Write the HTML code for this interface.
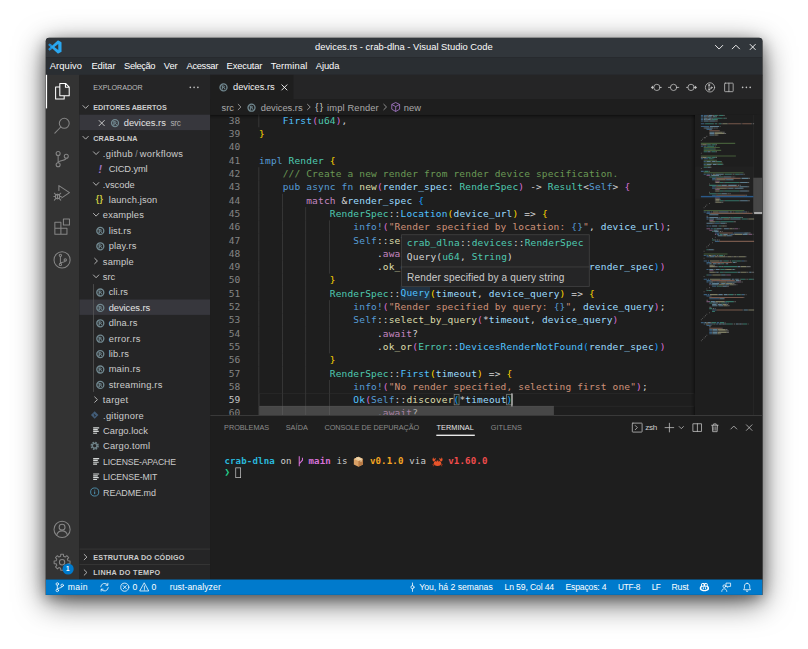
<!DOCTYPE html>
<html lang="pt-BR">
<head>
<meta charset="utf-8">
<title>devices.rs - crab-dlna - Visual Studio Code</title>
<style>
*{box-sizing:border-box;margin:0;padding:0}
html,body{width:808px;height:649px;overflow:hidden;background:#fff}
body{position:relative;font-family:"Liberation Sans","DejaVu Sans",sans-serif;}
#shadow{position:absolute;left:45.9px;top:37.9px;width:716.4px;height:556.5px;border-radius:3px;
  box-shadow:0 8px 31px 0 rgba(0,0,0,.66),0 4px 14px 0 rgba(0,0,0,.36);}
#win{position:absolute;left:45px;top:37px;width:1030px;height:800px;transform:scale(.7);transform-origin:0 0;color:#ccc;font-size:13.3px;}
#in{left:.57px;top:.5px;width:1024.9px;height:796.5px;border-radius:5px 5px 0 0;overflow:hidden;background:#1e1e1e}
#win div,#win span,#win svg{position:absolute}
.t{white-space:pre;line-height:1}
svg{overflow:visible}
/* title + menu */
#title{left:0;top:0;width:100%;height:28.6px;background:#31363b}
#title .t{color:#fcfcfc;font-size:13.4px;top:7.7px}
#menu{left:0;top:28.1px;width:100%;height:26px;background:#2a2e32}
#menu .t{color:#fcfcfc;font-size:13.4px;top:5.3px}
/* activity */
#activity{left:0;top:53.65px;width:48.3px;height:721.2px;background:#333333}
#activity svg{left:9.6px;width:28.8px;height:28.8px;margin-top:-2.4px;fill:none;stroke:#858585;stroke-width:1.25;stroke-linejoin:round;stroke-linecap:round}
#activity svg.on{stroke:#fff}
/* sidebar */
#sidebar{left:48px;top:53.65px;width:187.3px;height:721.2px;background:#252526;overflow:hidden}
#sidebar .hd{left:0;width:100%;height:22px}
#sidebar .hd .t{left:20.4px;top:6.8px;font-size:10.3px;font-weight:bold;color:#ccc;letter-spacing:0}
#sidebar .row{left:0;width:100%;height:22px}
#sidebar .row .t{top:5.3px;font-size:13.3px;color:#ccc}
#sidebar .row.sel{background:#37373d}
#sidebar .row.sel .t{color:#e4e4e4}
.chev{width:16px;height:16px;fill:none;stroke:#c5c5c5;stroke-width:1.25;stroke-linecap:round;stroke-linejoin:round}
.ico{width:16px;height:16px}
/* main */
#main{left:235px;top:53.65px;width:789.9px;height:721.2px;background:#1e1e1e;overflow:hidden}
#tabs{left:0;top:0;width:100%;height:35px;background:#252526}
#tab1{left:0;top:0;width:119.7px;height:35px;background:#1e1e1e}
#bc{left:0;top:35px;width:100%;height:22px;background:#1e1e1e}
#bc .t{top:4.6px;font-size:13.3px;color:#a9a9a9}
#ed{left:0;top:57px;width:100%;height:428.6px;background:#1e1e1e;overflow:hidden}
#code{left:0;top:-1.5px;width:100%;font-family:"DejaVu Sans Mono","Liberation Mono",monospace;font-size:13.6px;color:#d4d4d4}
#code .ln{left:0;height:19px;width:693.4px;line-height:19px;white-space:pre}
#code .no{left:0;width:43.4px;text-align:right;color:#858585;height:19px;line-height:19px}
#code .no.cur{color:#c6c6c6}
#code .tx{left:70.3px;height:19px;line-height:19px;white-space:pre;letter-spacing:.23px}
#code .tx span{position:static}
.k{color:#569cd6}.c{color:#c586c0}.ty{color:#4ec9b0}.f{color:#dcdcaa}.v{color:#9cdcfe}.e{color:#4fc1ff}
.cm{color:#6a9955}.s{color:#ce9178}.b1{color:#ffd700}.b2{color:#da70d6}.b3{color:#179fff}
.ig{width:1px;background:#404040}
/* panel */
#panel{left:0;top:485.6px;width:100%;height:235.3px;background:#1e1e1e;border-top:1px solid #454545}
#panel .pt{top:12.5px;font-size:10.4px;color:#8b8b8b}
#panel .pt.on{color:#e7e7e7}
#term{font-family:"DejaVu Sans Mono","Liberation Mono",monospace;font-size:13px;color:#ccc}
#term .t{line-height:16px;height:16px}
#term span span{position:static}
/* status */
#status{left:0;top:774.5px;width:100%;height:22.2px;background:#007acc}
#status .t{color:#fff;font-size:12.4px;top:5.1px}
#status svg{fill:none;stroke:#fff;stroke-width:1.1;stroke-linecap:round;stroke-linejoin:round;width:16px;height:16px;top:3px}
</style>
</head>
<body>
<div id="shadow"></div>
<div id="win"><div id="in">
<div id="title">
<svg style="left:4.9px;top:4.6px;width:18.6px;height:18.6px" viewBox="0 0 24 24"><path fill="#2aa7f0" d="M23.15 2.587L18.21.21a1.494 1.494 0 0 0-1.705.29l-9.46 8.63-4.12-3.128a.999.999 0 0 0-1.276.057L.327 7.261A1 1 0 0 0 .326 8.74L3.899 12 .326 15.26a1 1 0 0 0 .001 1.479L1.65 17.94a.999.999 0 0 0 1.276.057l4.12-3.128 9.46 8.63a1.492 1.492 0 0 0 1.704.29l4.942-2.377A1.5 1.5 0 0 0 24 20.06V3.939a1.5 1.5 0 0 0-.85-1.352zm-5.146 14.861L10.826 12l7.178-5.448v10.896z"/><path fill="#1f8ad2" d="M.326 8.74L3.899 12 .326 15.26a1 1 0 0 0 .001 1.479L1.65 17.94a.999.999 0 0 0 1.276.057l4.12-3.128L3.9 12 7.045 9.13l-4.12-3.128a.999.999 0 0 0-1.276.057L.327 7.261A1 1 0 0 0 .326 8.74z"/></svg>
<span class="t" style="left:385.1px;;letter-spacing:0.01px">devices.rs - crab-dlna - Visual Studio Code</span>
<svg style="left:954.1px;top:6px;width:16px;height:16px" viewBox="0 0 16 16" fill="none" stroke="#fcfcfc" stroke-width="1.3"><path d="M2.4 4.6 L8 10.2 L13.6 4.6"/></svg>
<svg style="left:978.4px;top:6px;width:16px;height:16px" viewBox="0 0 16 16" fill="none" stroke="#fcfcfc" stroke-width="1.3"><path d="M2.4 10.3 L8 4.7 L13.6 10.3"/></svg>
<svg style="left:1002.6px;top:6px;width:16px;height:16px" viewBox="0 0 16 16" fill="none" stroke="#fcfcfc" stroke-width="1.3"><path d="M3.9 3.2 L12.1 11.400 M12.1 3.2 L3.9 11.400"/></svg>
</div>
<div id="menu">
<span class="t" style="left:6.3px;;letter-spacing:0.10px">Arquivo</span>
<span class="t" style="left:65.7px;;letter-spacing:-0.07px">Editar</span>
<span class="t" style="left:112.4px;;letter-spacing:-0.57px">Seleção</span>
<span class="t" style="left:169.1px;;letter-spacing:-0.13px">Ver</span>
<span class="t" style="left:201.6px;;letter-spacing:-0.50px">Acessar</span>
<span class="t" style="left:258.9px;;letter-spacing:-0.25px">Executar</span>
<span class="t" style="left:322.0px;;letter-spacing:0.23px">Terminal</span>
<span class="t" style="left:386.1px;;letter-spacing:-0.05px">Ajuda</span>
</div>
<div id="activity">
<div style="left:0;top:0;width:2px;height:48px;background:#fff"></div>
<svg class="on" style="top:11px" viewBox="0 0 24 24"><path d="M9.3 2.8h6.9l4.3 4.3v10.4H9.3z M16 2.9v4.4h4.4 M9.2 7H4.3v14.3h10.2v-3.6"/></svg>
<svg style="top:60px" viewBox="0 0 24 24"><circle cx="14.6" cy="9.4" r="5.9"/><path d="M10.4 13.8 L3.4 21.2"/></svg>
<svg style="top:108px" viewBox="0 0 24 24"><circle cx="7.3" cy="5.3" r="2.4"/><circle cx="7.3" cy="18.7" r="2.4"/><circle cx="17" cy="8.6" r="2.4"/><path d="M7.3 7.7v8.6 M17 11c0 3.2-9.7 2-9.7 5.3"/></svg>
<svg style="top:156px" viewBox="0 0 24 24"><path d="M8.2 9.5V3.6L20.8 12 11.5 18.2"/><circle cx="6.6" cy="16.6" r="2.6"/><path d="M6.6 14v5.2 M2.2 16.6h1.8 M9.2 16.6H11 M2.8 12.6l1.9 1.9 M10.4 12.6l-1.9 1.9 M2.8 20.8l1.9-2 M10.4 20.8l-1.9-2"/></svg>
<svg style="top:204px" viewBox="0 0 24 24"><path d="M3.4 7.2h7.2v7.2H3.4z M3.4 14.4h7.2v7.2H3.4z M10.6 14.4h7.2v7.2h-7.2z M13.6 3.3h7.2v7.2h-7.2z"/></svg>
<svg style="top:252px" viewBox="0 0 24 24"><circle cx="12" cy="12" r="9.6"/><circle cx="10" cy="6.600" r="1.400"/><circle cx="10" cy="17.400" r="1.400"/><circle cx="15.800" cy="12" r="1.400"/><path d="M10 8v8M15.800 13.400c0 2-5.800 1-5.800 2.800"/></svg>
<svg style="top:637.6px" viewBox="0 0 24 24"><circle cx="12" cy="12" r="9.6"/><circle cx="12" cy="9.4" r="3.5"/><path d="M5.6 19c.8-3.6 3.4-5.2 6.4-5.2s5.600 1.600 6.400 5.200"/></svg>
<svg style="top:684.3px" viewBox="0 0 24 24"><circle cx="12" cy="12" r="3.2"/><path d="M10.24 4.92L10.42 2.53L13.58 2.53L13.76 4.92L15.77 5.75L17.58 4.19L19.81 6.42L18.25 8.23L19.08 10.24L21.47 10.42L21.47 13.58L19.08 13.76L18.25 15.77L19.81 17.58L17.58 19.81L15.77 18.25L13.76 19.08L13.58 21.47L10.42 21.47L10.24 19.08L8.23 18.25L6.42 19.81L4.19 17.58L5.75 15.77L4.92 13.76L2.53 13.58L2.53 10.42L4.92 10.24L5.75 8.23L4.19 6.42L6.42 4.19L8.23 5.75Z"/></svg>
<div style="left:24px;top:698.3px;width:16px;height:16px;border-radius:8px;background:#007acc"></div>
<span class="t" style="left:29.6px;top:701.6px;font-size:9px;font-weight:bold;color:#fff">1</span>
</div>
<div id="sidebar">
<span class="t" style="left:20.4px;top:13.7px;font-size:10.2px;color:#bbb;letter-spacing:-0.01px">EXPLORADOR</span>
<svg style="left:156.4px;top:10px;width:16px;height:16px" viewBox="0 0 16 16" fill="#c5c5c5"><circle cx="2.600" cy="8" r="1.150"/><circle cx="8" cy="8" r="1.150"/><circle cx="13.400" cy="8" r="1.150"/></svg>
<div class="hd" style="top:35px"><svg class="chev" style="left:1.8px;top:3.0px;stroke:#c5c5c5" viewBox="0 0 16 16"><path d="M4.2 6 L8 9.9 L11.8 6"/></svg><span class="t" style="left:20.4px;;letter-spacing:-0.01px">EDITORES ABERTOS</span></div>
<div class="row sel" style="top:57px">
<svg class="chev" style="left:24px;top:3.600px;stroke:#d4d4d4;stroke-width:1.3" viewBox="0 0 16 16"><path d="M4.300 4.300L11.700 11.700M11.700 4.300L4.300 11.700"/></svg>
<svg style="left:43.4px;top:3.6px;width:16px;height:16px" viewBox="0 0 16 16"><circle cx="8" cy="8" r="5.0" fill="none" stroke="#718890" stroke-width="1.9"/><path d="M6.400 10.200V6h2c1.500 0 1.500 2 0 2h-2M8.400 8l1.500 2.200M5.400 6h1.600M5.400 10.200h2M9.400 10.200h1.300" fill="none" stroke="#718890" stroke-width="1.400"/></svg>
<span class="t" style="left:63.9px;color:#e4e4e4;letter-spacing:0.03px">devices.rs</span>
<span class="t" style="left:130.7px;top:6.8px;font-size:11.8px;color:#b0b0b0;letter-spacing:-0.43px">src</span>
</div>
<div class="hd" style="top:79px"><svg class="chev" style="left:1.8px;top:3.0px;stroke:#c5c5c5" viewBox="0 0 16 16"><path d="M4.2 6 L8 9.9 L11.8 6"/></svg><span class="t" style="left:20.4px;;letter-spacing:0.18px">CRAB-DLNA</span></div>
<div class="row" style="top:101px">
<svg class="chev" style="left:16.0px;top:3.0px;stroke:#c5c5c5" viewBox="0 0 16 16"><path d="M4.2 6 L8 9.9 L11.8 6"/></svg>
<span class="t" style="left:34.0px;;letter-spacing:0.48px">.github</span>
<span class="t" style="left:80.4px;top:6.2px;color:#999;font-size:12px">/</span>
<span class="t" style="left:86.9px;;letter-spacing:0.42px">workflows</span>
</div>
<div class="row" style="top:123px">
<span class="t" style="left:27.9px;top:3.5px;font-size:15px;font-weight:bold;font-style:italic;color:#a074c4">!</span>
<span class="t" style="left:42.4px;;letter-spacing:-0.17px">CICD.yml</span>
</div>
<div class="row" style="top:145px">
<svg class="chev" style="left:16.0px;top:3.0px;stroke:#c5c5c5" viewBox="0 0 16 16"><path d="M4.2 6 L8 9.9 L11.8 6"/></svg>
<span class="t" style="left:34.0px;;letter-spacing:-0.04px">.vscode</span>
</div>
<div class="row" style="top:167px">
<span class="t" style="left:23.8px;top:3.4px;font-size:12.5px;font-weight:bold;color:#cbcb41;letter-spacing:.6px">{}</span>
<span class="t" style="left:42.4px;;letter-spacing:0.22px">launch.json</span>
</div>
<div class="row" style="top:189px">
<svg class="chev" style="left:16.0px;top:3.0px;stroke:#c5c5c5" viewBox="0 0 16 16"><path d="M4.2 6 L8 9.9 L11.8 6"/></svg>
<span class="t" style="left:34.0px;;letter-spacing:0.24px">examples</span>
</div>
<div class="row" style="top:211px">
<svg style="left:22.4px;top:3.6px;width:16px;height:16px" viewBox="0 0 16 16"><circle cx="8" cy="8" r="5.0" fill="none" stroke="#718890" stroke-width="1.9"/><path d="M6.400 10.200V6h2c1.500 0 1.500 2 0 2h-2M8.400 8l1.500 2.200M5.400 6h1.600M5.400 10.200h2M9.400 10.200h1.300" fill="none" stroke="#718890" stroke-width="1.400"/></svg>
<span class="t" style="left:42.4px;;letter-spacing:0.20px">list.rs</span>
</div>
<div class="row" style="top:233px">
<svg style="left:22.4px;top:3.6px;width:16px;height:16px" viewBox="0 0 16 16"><circle cx="8" cy="8" r="5.0" fill="none" stroke="#718890" stroke-width="1.9"/><path d="M6.400 10.200V6h2c1.500 0 1.500 2 0 2h-2M8.400 8l1.500 2.200M5.400 6h1.600M5.400 10.200h2M9.400 10.200h1.300" fill="none" stroke="#718890" stroke-width="1.400"/></svg>
<span class="t" style="left:42.4px;;letter-spacing:0.22px">play.rs</span>
</div>
<div class="row" style="top:255px">
<svg class="chev" style="left:16.0px;top:3.0px;stroke:#c5c5c5" viewBox="0 0 16 16"><path d="M6 4.2 L9.9 8 L6 11.8"/></svg>
<span class="t" style="left:34.0px;;letter-spacing:0.28px">sample</span>
</div>
<div class="row" style="top:277px">
<svg class="chev" style="left:16.0px;top:3.0px;stroke:#c5c5c5" viewBox="0 0 16 16"><path d="M4.2 6 L8 9.9 L11.8 6"/></svg>
<span class="t" style="left:34.0px;;letter-spacing:-0.05px">src</span>
</div>
<div class="row" style="top:299px">
<svg style="left:22.4px;top:3.6px;width:16px;height:16px" viewBox="0 0 16 16"><circle cx="8" cy="8" r="5.0" fill="none" stroke="#718890" stroke-width="1.9"/><path d="M6.400 10.200V6h2c1.500 0 1.500 2 0 2h-2M8.400 8l1.500 2.200M5.400 6h1.600M5.400 10.200h2M9.400 10.200h1.300" fill="none" stroke="#718890" stroke-width="1.400"/></svg>
<span class="t" style="left:42.4px;;letter-spacing:0.04px">cli.rs</span>
</div>
<div class="row sel" style="top:321px">
<svg style="left:22.4px;top:3.6px;width:16px;height:16px" viewBox="0 0 16 16"><circle cx="8" cy="8" r="5.0" fill="none" stroke="#718890" stroke-width="1.9"/><path d="M6.400 10.200V6h2c1.500 0 1.500 2 0 2h-2M8.400 8l1.500 2.200M5.400 6h1.600M5.400 10.200h2M9.400 10.200h1.300" fill="none" stroke="#718890" stroke-width="1.400"/></svg>
<span class="t" style="left:42.4px;;letter-spacing:-0.07px">devices.rs</span>
</div>
<div class="row" style="top:343px">
<svg style="left:22.4px;top:3.6px;width:16px;height:16px" viewBox="0 0 16 16"><circle cx="8" cy="8" r="5.0" fill="none" stroke="#718890" stroke-width="1.9"/><path d="M6.400 10.200V6h2c1.500 0 1.500 2 0 2h-2M8.400 8l1.500 2.200M5.400 6h1.600M5.400 10.200h2M9.400 10.200h1.300" fill="none" stroke="#718890" stroke-width="1.400"/></svg>
<span class="t" style="left:42.4px;;letter-spacing:0.17px">dlna.rs</span>
</div>
<div class="row" style="top:365px">
<svg style="left:22.4px;top:3.6px;width:16px;height:16px" viewBox="0 0 16 16"><circle cx="8" cy="8" r="5.0" fill="none" stroke="#718890" stroke-width="1.9"/><path d="M6.400 10.200V6h2c1.500 0 1.500 2 0 2h-2M8.400 8l1.500 2.200M5.400 6h1.600M5.400 10.200h2M9.400 10.200h1.300" fill="none" stroke="#718890" stroke-width="1.400"/></svg>
<span class="t" style="left:42.4px;;letter-spacing:0.48px">error.rs</span>
</div>
<div class="row" style="top:387px">
<svg style="left:22.4px;top:3.6px;width:16px;height:16px" viewBox="0 0 16 16"><circle cx="8" cy="8" r="5.0" fill="none" stroke="#718890" stroke-width="1.9"/><path d="M6.400 10.200V6h2c1.500 0 1.500 2 0 2h-2M8.400 8l1.500 2.200M5.400 6h1.600M5.400 10.200h2M9.400 10.200h1.300" fill="none" stroke="#718890" stroke-width="1.400"/></svg>
<span class="t" style="left:42.4px;;letter-spacing:0.18px">lib.rs</span>
</div>
<div class="row" style="top:409px">
<svg style="left:22.4px;top:3.6px;width:16px;height:16px" viewBox="0 0 16 16"><circle cx="8" cy="8" r="5.0" fill="none" stroke="#718890" stroke-width="1.9"/><path d="M6.400 10.200V6h2c1.500 0 1.500 2 0 2h-2M8.400 8l1.500 2.200M5.400 6h1.600M5.400 10.200h2M9.400 10.200h1.300" fill="none" stroke="#718890" stroke-width="1.400"/></svg>
<span class="t" style="left:42.4px;;letter-spacing:0.28px">main.rs</span>
</div>
<div class="row" style="top:431px">
<svg style="left:22.4px;top:3.6px;width:16px;height:16px" viewBox="0 0 16 16"><circle cx="8" cy="8" r="5.0" fill="none" stroke="#718890" stroke-width="1.9"/><path d="M6.400 10.200V6h2c1.500 0 1.500 2 0 2h-2M8.400 8l1.500 2.200M5.400 6h1.600M5.400 10.200h2M9.400 10.200h1.300" fill="none" stroke="#718890" stroke-width="1.400"/></svg>
<span class="t" style="left:42.4px;;letter-spacing:0.32px">streaming.rs</span>
</div>
<div class="row" style="top:453px">
<svg class="chev" style="left:16.0px;top:3.0px;stroke:#c5c5c5" viewBox="0 0 16 16"><path d="M6 4.2 L9.9 8 L6 11.8"/></svg>
<span class="t" style="left:34.0px;;letter-spacing:0.45px">target</span>
</div>
<div class="row" style="top:475px">
<svg style="left:14.9px;top:3.0px;width:16px;height:16px" viewBox="0 0 16 16"><path d="M8 2.600 L13.400 8 L8 13.400 L2.600 8Z" fill="#435d78"/><path d="M6.400 6.200L9.700 9.500M8 7.800V10.400" stroke="#252526" stroke-width="1.1" fill="none"/></svg>
<span class="t" style="left:34.4px;;letter-spacing:0.37px">.gitignore</span>
</div>
<div class="row" style="top:497px">
<svg style="left:16.2px;top:3.0px;width:16px;height:16px" viewBox="0 0 16 16"><path d="M3.800 4.300h8.600M3.800 6.900h6.600M3.800 9.500h8M3.800 12.100h5.600" stroke="#d4d7d6" stroke-width="1.700" fill="none"/></svg>
<span class="t" style="left:34.4px;;letter-spacing:0.04px">Cargo.lock</span>
</div>
<div class="row" style="top:519px">
<svg style="left:14.9px;top:3.0px;width:16px;height:16px" viewBox="0 0 16 16"><circle cx="8" cy="8" r="4.400" fill="none" stroke="#6d8086" stroke-width="3.200" stroke-dasharray="2.100 1.360"/><circle cx="8" cy="8" r="3.300" fill="none" stroke="#6d8086" stroke-width="1.800"/></svg>
<span class="t" style="left:34.4px;;letter-spacing:0.23px">Cargo.toml</span>
</div>
<div class="row" style="top:541px">
<svg style="left:16.2px;top:3.0px;width:16px;height:16px" viewBox="0 0 16 16"><path d="M3.800 4.300h8.600M3.800 6.900h6.600M3.800 9.500h8M3.800 12.100h5.600" stroke="#d4d7d6" stroke-width="1.700" fill="none"/></svg>
<span class="t" style="left:34.4px;font-size:12.4px;top:6.3px;letter-spacing:-0.24px">LICENSE-APACHE</span>
</div>
<div class="row" style="top:563px">
<svg style="left:16.2px;top:3.0px;width:16px;height:16px" viewBox="0 0 16 16"><path d="M3.800 4.300h8.600M3.800 6.900h6.600M3.800 9.500h8M3.800 12.100h5.600" stroke="#d4d7d6" stroke-width="1.700" fill="none"/></svg>
<span class="t" style="left:34.4px;font-size:12.4px;top:6.3px;letter-spacing:-0.10px">LICENSE-MIT</span>
</div>
<div class="row" style="top:585px">
<svg style="left:14.9px;top:3.0px;width:16px;height:16px" viewBox="0 0 16 16"><circle cx="8" cy="8" r="5.800" fill="none" stroke="#519aba" stroke-width="1.200"/><path d="M8 7.200v3.800M8 4.800v1.100" stroke="#519aba" stroke-width="1.400" fill="none"/></svg>
<span class="t" style="left:34.4px;font-size:12.8px;top:6.1px;letter-spacing:-0.07px">README.md</span>
</div>
<div style="left:20.7px;top:299px;width:1px;height:154px;background:#5a5a5a"></div>
<div class="hd" style="top:676.9px;border-top:1px solid #3c3c3c"><svg class="chev" style="left:1.8px;top:3.0px;stroke:#c5c5c5" viewBox="0 0 16 16"><path d="M6 4.2 L9.9 8 L6 11.8"/></svg><span class="t" style="left:20.4px;;letter-spacing:0.22px">ESTRUTURA DO CÓDIGO</span></div>
<div class="hd" style="top:698.9px;border-top:1px solid #3c3c3c"><svg class="chev" style="left:1.8px;top:3.0px;stroke:#c5c5c5" viewBox="0 0 16 16"><path d="M6 4.2 L9.9 8 L6 11.8"/></svg><span class="t" style="left:20.4px;;letter-spacing:0.52px">LINHA DO TEMPO</span></div>
</div>
<div id="main">
<div id="tabs"><div id="tab1">
<svg style="left:11.1px;top:10.1px;width:16px;height:16px" viewBox="0 0 16 16"><circle cx="8" cy="8" r="5.0" fill="none" stroke="#718890" stroke-width="1.9"/><path d="M6.400 10.200V6h2c1.500 0 1.500 2 0 2h-2M8.400 8l1.500 2.200M5.400 6h1.600M5.400 10.200h2M9.400 10.200h1.300" fill="none" stroke="#718890" stroke-width="1.400"/></svg>
<span class="t" style="left:33.0px;top:11.2px;color:#f0f0f0;font-size:13.3px;letter-spacing:-0.04px">devices.rs</span>
<svg class="chev" style="left:98.3px;top:9.5px;stroke:#fff" viewBox="0 0 16 16"><path d="M4.300 4.300L11.700 11.700M11.700 4.300L4.300 11.700"/></svg>
</div>
<svg style="left:629.0px;top:9.5px;width:16px;height:16px;fill:none;stroke:#c5c5c5;stroke-width:1.1;stroke-linecap:round;stroke-linejoin:round" viewBox="0 0 16 16"><circle cx="9.1" cy="8" r="4.5"/><path d="M4.600 8H3.200M13.600 8h2"/><path d="M3.600 5.400L.5 8l3.100 2.600z" fill="#c5c5c5" stroke="none"/></svg>
<svg style="left:654.9px;top:9.5px;width:16px;height:16px;fill:none;stroke:#c5c5c5;stroke-width:1.1;stroke-linecap:round;stroke-linejoin:round" viewBox="0 0 16 16"><circle cx="8" cy="8" r="4.500"/><path d="M3.500 8H.6M12.500 8h2.900"/></svg>
<svg style="left:680.9px;top:9.5px;width:16px;height:16px;fill:none;stroke:#c5c5c5;stroke-width:1.1;stroke-linecap:round;stroke-linejoin:round" viewBox="0 0 16 16"><circle cx="6.900" cy="8" r="4.500"/><path d="M11.400 8h1.400M2.400 8H.4"/><path d="M12.400 5.400L15.500 8l-3.100 2.600z" fill="#c5c5c5" stroke="none"/></svg>
<svg style="left:706.7px;top:9.5px;width:16px;height:16px;fill:none;stroke:#c5c5c5;stroke-width:1.1;stroke-linecap:round;stroke-linejoin:round" viewBox="0 0 16 16"><circle cx="8" cy="8" r="6.600"/><circle cx="6.600" cy="4.600" r=".9"/><circle cx="6.600" cy="11.400" r=".9"/><circle cx="10.200" cy="8.300" r=".9"/><path d="M6.600 5.500v5M10.200 9.200c0 1.300-3.600.6-3.600 1.800"/></svg>
<svg style="left:733.3px;top:9.5px;width:16px;height:16px;fill:none;stroke:#c5c5c5;stroke-width:1.1;stroke-linecap:round;stroke-linejoin:round" viewBox="0 0 16 16"><path d="M2.700 1.900h10.600a.8.8 0 0 1 .8.800v10.600a.8.8 0 0 1-.8.800H2.700a.8.8 0 0 1-.8-.8V2.700a.8.8 0 0 1 .8-.8zM8 1.900v12.200"/></svg>
<svg style="left:758.4px;top:9.900px;width:16px;height:16px" viewBox="0 0 16 16" fill="#c5c5c5"><circle cx="2.600" cy="8" r="1.150"/><circle cx="8" cy="8" r="1.150"/><circle cx="13.400" cy="8" r="1.150"/></svg>
</div>
<div id="bc">
<span class="t" style="left:16.7px;">src</span>
<svg class="chev" style="left:34.9px;top:3.0px;stroke:#a0a0a0" viewBox="0 0 16 16"><path d="M6 4.2 L9.9 8 L6 11.8"/></svg>
<svg style="left:51.3px;top:3.6px;width:16px;height:16px" viewBox="0 0 16 16"><circle cx="8" cy="8" r="5.0" fill="none" stroke="#718890" stroke-width="1.9"/><path d="M6.400 10.200V6h2c1.500 0 1.500 2 0 2h-2M8.400 8l1.500 2.200M5.400 6h1.600M5.400 10.200h2M9.400 10.200h1.300" fill="none" stroke="#718890" stroke-width="1.400"/></svg>
<span class="t" style="left:72.6px;">devices.rs</span>
<svg class="chev" style="left:133.0px;top:3.0px;stroke:#a0a0a0" viewBox="0 0 16 16"><path d="M6 4.2 L9.9 8 L6 11.8"/></svg>
<span class="t" style="left:150.4px;top:3.4px;color:#c5c5c5;font-size:13.8px;letter-spacing:2px">{}</span>
<span class="t" style="left:167.3px;;letter-spacing:0.22px">impl Render</span>
<svg class="chev" style="left:242.3px;top:3.0px;stroke:#a0a0a0" viewBox="0 0 16 16"><path d="M6 4.2 L9.9 8 L6 11.8"/></svg>
<svg style="left:257.2px;top:3px;width:16px;height:16px;fill:none;stroke:#b180d7;stroke-width:1.1;stroke-linejoin:round" viewBox="0 0 16 16"><path d="M8 1.600l5.600 2.800v6.800L8 14.400l-5.600-3.200V4.400zM2.400 4.400L8 7.400l5.600-3M8 7.400v7"/></svg>
<span class="t" style="left:277.0px;">new</span>
</div>
<div id="ed">
<div id="code">
<div class="ig" style="left:69.8px;top:0px;height:19px"></div>
<div class="no" style="top:0px">38</div>
<div class="tx" style="top:0px">    <span class="e">First</span><span class="b2">(</span><span class="ty">u64</span><span class="b2">)</span>,</div>
<div class="no" style="top:19px">39</div>
<div class="tx" style="top:19px"><span class="b1">}</span></div>
<div class="no" style="top:38px">40</div>
<div class="tx" style="top:38px"></div>
<div class="no" style="top:57px">41</div>
<div class="tx" style="top:57px"><span class="k">impl</span> <span class="ty">Render</span> <span class="b1">{</span></div>
<div class="ig" style="left:69.8px;top:76px;height:19px"></div>
<div class="no" style="top:76px">42</div>
<div class="tx" style="top:76px">    <span class="cm">/// Create a new render from render device specification.</span></div>
<div class="ig" style="left:69.8px;top:95px;height:19px"></div>
<div class="no" style="top:95px">43</div>
<div class="tx" style="top:95px">    <span class="k">pub</span> <span class="k">async</span> <span class="k">fn</span> <span class="f">new</span><span class="b2">(</span><span class="v">render_spec</span>: <span class="ty">RenderSpec</span><span class="b2">)</span> -&gt; <span class="ty">Result</span>&lt;<span class="k">Self</span>&gt; <span class="b2">{</span></div>
<div class="ig" style="left:69.8px;top:114px;height:19px"></div>
<div class="ig" style="left:103.2px;top:114px;height:19px"></div>
<div class="no" style="top:114px">44</div>
<div class="tx" style="top:114px">        <span class="c">match</span> &amp;<span class="v">render_spec</span> <span class="b3">{</span></div>
<div class="ig" style="left:69.8px;top:133px;height:19px"></div>
<div class="ig" style="left:103.2px;top:133px;height:19px"></div>
<div class="ig" style="left:136.7px;top:133px;height:19px"></div>
<div class="no" style="top:133px">45</div>
<div class="tx" style="top:133px">            <span class="ty">RenderSpec</span>::<span class="e">Location</span><span class="b1">(</span><span class="v">device_url</span><span class="b1">)</span> =&gt; <span class="b1">{</span></div>
<div class="ig" style="left:69.8px;top:152px;height:19px"></div>
<div class="ig" style="left:103.2px;top:152px;height:19px"></div>
<div class="ig" style="left:136.7px;top:152px;height:19px"></div>
<div class="ig" style="left:170.1px;top:152px;height:19px"></div>
<div class="no" style="top:152px">46</div>
<div class="tx" style="top:152px">                <span class="k">info!</span><span class="b2">(</span><span class="s">"Render specified by location: </span><span class="k">{}</span><span class="s">"</span>, <span class="v">device_url</span><span class="b2">)</span>;</div>
<div class="ig" style="left:69.8px;top:171px;height:19px"></div>
<div class="ig" style="left:103.2px;top:171px;height:19px"></div>
<div class="ig" style="left:136.7px;top:171px;height:19px"></div>
<div class="ig" style="left:170.1px;top:171px;height:19px"></div>
<div class="no" style="top:171px">47</div>
<div class="tx" style="top:171px">                <span class="k">Self</span>::<span class="f">select_by_url</span><span class="b2">(</span><span class="v">device_url</span><span class="b2">)</span></div>
<div class="ig" style="left:69.8px;top:190px;height:19px"></div>
<div class="ig" style="left:103.2px;top:190px;height:19px"></div>
<div class="ig" style="left:136.7px;top:190px;height:19px"></div>
<div class="ig" style="left:170.1px;top:190px;height:19px"></div>
<div class="no" style="top:190px">48</div>
<div class="tx" style="top:190px">                    .<span class="c">await</span>?</div>
<div class="ig" style="left:69.8px;top:209px;height:19px"></div>
<div class="ig" style="left:103.2px;top:209px;height:19px"></div>
<div class="ig" style="left:136.7px;top:209px;height:19px"></div>
<div class="ig" style="left:170.1px;top:209px;height:19px"></div>
<div class="no" style="top:209px">49</div>
<div class="tx" style="top:209px">                    .<span class="f">ok_or</span><span class="b2">(</span><span class="ty">Error</span>::<span class="e">DevicesRenderNotFound</span><span class="b3">(</span><span class="v">render_spec</span><span class="b3">)</span><span class="b2">)</span></div>
<div class="ig" style="left:69.8px;top:228px;height:19px"></div>
<div class="ig" style="left:103.2px;top:228px;height:19px"></div>
<div class="ig" style="left:136.7px;top:228px;height:19px"></div>
<div class="no" style="top:228px">50</div>
<div class="tx" style="top:228px">            <span class="b1">}</span></div>
<div class="ig" style="left:69.8px;top:247px;height:19px"></div>
<div class="ig" style="left:103.2px;top:247px;height:19px"></div>
<div class="ig" style="left:136.7px;top:247px;height:19px"></div>
<div class="no" style="top:247px">51</div>
<div class="tx" style="top:247px">            <span class="ty">RenderSpec</span>::<span class="e" style="background:rgba(38,79,120,.4);padding:2.6px 0">Query</span><span class="b1">(</span><span class="v">timeout</span>, <span class="v">device_query</span><span class="b1">)</span> =&gt; <span class="b1">{</span></div>
<div class="ig" style="left:69.8px;top:266px;height:19px"></div>
<div class="ig" style="left:103.2px;top:266px;height:19px"></div>
<div class="ig" style="left:136.7px;top:266px;height:19px"></div>
<div class="ig" style="left:170.1px;top:266px;height:19px"></div>
<div class="no" style="top:266px">52</div>
<div class="tx" style="top:266px">                <span class="k">info!</span><span class="b2">(</span><span class="s">"Render specified by query: </span><span class="k">{}</span><span class="s">"</span>, <span class="v">device_query</span><span class="b2">)</span>;</div>
<div class="ig" style="left:69.8px;top:285px;height:19px"></div>
<div class="ig" style="left:103.2px;top:285px;height:19px"></div>
<div class="ig" style="left:136.7px;top:285px;height:19px"></div>
<div class="ig" style="left:170.1px;top:285px;height:19px"></div>
<div class="no" style="top:285px">53</div>
<div class="tx" style="top:285px">                <span class="k">Self</span>::<span class="f">select_by_query</span><span class="b2">(</span>*<span class="v">timeout</span>, <span class="v">device_query</span><span class="b2">)</span></div>
<div class="ig" style="left:69.8px;top:304px;height:19px"></div>
<div class="ig" style="left:103.2px;top:304px;height:19px"></div>
<div class="ig" style="left:136.7px;top:304px;height:19px"></div>
<div class="ig" style="left:170.1px;top:304px;height:19px"></div>
<div class="no" style="top:304px">54</div>
<div class="tx" style="top:304px">                    .<span class="c">await</span>?</div>
<div class="ig" style="left:69.8px;top:323px;height:19px"></div>
<div class="ig" style="left:103.2px;top:323px;height:19px"></div>
<div class="ig" style="left:136.7px;top:323px;height:19px"></div>
<div class="ig" style="left:170.1px;top:323px;height:19px"></div>
<div class="no" style="top:323px">55</div>
<div class="tx" style="top:323px">                    .<span class="f">ok_or</span><span class="b2">(</span><span class="ty">Error</span>::<span class="e">DevicesRenderNotFound</span><span class="b3">(</span><span class="v">render_spec</span><span class="b3">)</span><span class="b2">)</span></div>
<div class="ig" style="left:69.8px;top:342px;height:19px"></div>
<div class="ig" style="left:103.2px;top:342px;height:19px"></div>
<div class="ig" style="left:136.7px;top:342px;height:19px"></div>
<div class="no" style="top:342px">56</div>
<div class="tx" style="top:342px">            <span class="b1">}</span></div>
<div class="ig" style="left:69.8px;top:361px;height:19px"></div>
<div class="ig" style="left:103.2px;top:361px;height:19px"></div>
<div class="ig" style="left:136.7px;top:361px;height:19px"></div>
<div class="no" style="top:361px">57</div>
<div class="tx" style="top:361px">            <span class="ty">RenderSpec</span>::<span class="e">First</span><span class="b1">(</span><span class="v">timeout</span><span class="b1">)</span> =&gt; <span class="b1">{</span></div>
<div class="ig" style="left:69.8px;top:380px;height:19px"></div>
<div class="ig" style="left:103.2px;top:380px;height:19px"></div>
<div class="ig" style="left:136.7px;top:380px;height:19px"></div>
<div class="ig" style="left:170.1px;top:380px;height:19px"></div>
<div class="no" style="top:380px">58</div>
<div class="tx" style="top:380px">                <span class="k">info!</span><span class="b2">(</span><span class="s">"No render specified, selecting first one"</span><span class="b2">)</span>;</div>
<div style="left:70.3px;top:399px;width:622px;height:19px;border:1.5px solid #2b2b2b"></div>
<div class="ig" style="left:69.8px;top:399px;height:19px"></div>
<div class="ig" style="left:103.2px;top:399px;height:19px"></div>
<div class="ig" style="left:136.7px;top:399px;height:19px"></div>
<div class="ig" style="left:170.1px;top:399px;height:19px"></div>
<div class="no cur" style="top:399px">59</div>
<div class="tx" style="top:399px">                <span class="e">Ok</span><span class="b2">(</span><span class="k">Self</span>::<span class="f">discover</span><span class="b3" style="outline:1px solid #888;outline-offset:-1px;background:rgba(0,100,0,.1)">(</span>*<span class="v">timeout</span><span class="b3" style="outline:1px solid #888;outline-offset:-1px;background:rgba(0,100,0,.1)">)</span></div>
<div class="ig" style="left:69.8px;top:418px;height:19px"></div>
<div class="ig" style="left:103.2px;top:418px;height:19px"></div>
<div class="ig" style="left:136.7px;top:418px;height:19px"></div>
<div class="ig" style="left:170.1px;top:418px;height:19px"></div>
<div class="no" style="top:418px">60</div>
<div class="tx" style="top:418px">                    .<span class="c">await</span>?</div>
<div style="left:430.0px;top:399px;width:2px;height:19px;background:#aeafad"></div>
</div>
<div style="left:0;top:0;width:693.4px;height:6px;box-shadow:inset 0 6px 6px -6px #000"></div>
<div style="left:687.4px;top:0;width:6px;height:428.6px;box-shadow:inset -6px 0 6px -6px #000"></div>
<div style="left:70.3px;top:416.1px;width:420.7px;height:12.5px;background:rgba(121,121,121,.45)"></div>
<div style="left:776.3px;top:0;width:1px;height:428.6px;background:#2c2c2c"></div>
<div style="left:776.3px;top:90.3px;width:14px;height:50.9px;background:rgba(121,121,121,.45)"></div>
<div style="left:777.6px;top:139.1px;width:12px;height:2.8px;background:#a8a8a8"></div>
<div style="left:273.4px;top:170.6px;width:268.7px;height:74.8px;background:#252526;border:1px solid #454545"></div>
<div style="left:273.4px;top:216.4px;width:268.7px;height:1px;background:#454545"></div>
<span class="t" style="left:281.4px;top:173.8px;font-family:'DejaVu Sans Mono','Liberation Mono',monospace;font-size:13.6px;letter-spacing:.23px;line-height:19px;color:#d4d4d4"><span class="ty" style="position:static">crab_dlna</span>::<span class="ty" style="position:static">devices</span>::<span class="ty" style="position:static">RenderSpec</span></span>
<span class="t" style="left:281.4px;top:192.8px;font-family:'DejaVu Sans Mono','Liberation Mono',monospace;font-size:13.6px;letter-spacing:.23px;line-height:19px;color:#d4d4d4">Query(<span class="ty" style="position:static">u64</span>, <span class="ty" style="position:static">String</span>)</span>
<span class="t" style="left:281.7px;top:225.1px;font-size:14.4px;color:#ccc;letter-spacing:0.19px">Render specified by a query string</span>
<svg style="left:701.9px;top:-0.3px;width:80px;height:324px;opacity:.5" viewBox="0 0 80 324" fill="none" stroke-width="1.5">
<path stroke="#569cd6" d="M0 1h3M4 1h5M0 3h3M0 5h3M0 7h3M0 9h3M0 13h5M0 17h12M8 21h7M0 45h3M4 45h4M0 63h3M4 63h6M4 67h3M4 71h3M0 81h4M4 85h3M8 85h5M14 85h2M56 85h4M16 91h5M16 93h4M16 103h5M16 105h4M16 115h5M19 117h4M4 139h3M8 139h5M14 139h2M60 139h4M8 141h5M8 147h3M8 149h3M19 155h8M8 159h3M12 159h3M14 163h3M20 169h6M47 169h14M23 171h3M42 171h4M20 181h6M4 201h3M8 201h2M17 201h4M8 203h4M4 209h5M10 209h2M58 209h4M8 211h6M8 213h3M8 221h3M11 229h4M4 235h5M10 235h2M8 237h6M8 239h3M19 239h2M22 239h4M12 241h3M16 245h6M4 257h5M10 257h2M58 257h4M8 259h6M12 263h14M34 269h4M16 279h6M0 297h4M23 297h3M4 299h2M12 299h4M22 299h3M8 301h6M12 307h4M12 309h4M12 311h4M12 313h4"/>
<path stroke="#c586c0" d="M8 87h5M21 95h5M21 107h5M21 119h5M13 151h5M8 163h5M48 163h5M12 165h5M20 171h2M68 171h5M13 223h5M37 229h5M52 239h5M12 243h2M8 267h5"/>
<path stroke="#4ec9b0" d="M19 1h5M26 1h6M18 5h12M32 5h3M15 7h8M6 13h12M20 13h3M26 13h3M9 43h5M16 43h5M9 45h10M4 49h8M13 49h6M4 53h5M15 53h6M9 61h5M16 61h5M11 63h6M23 67h6M24 71h7M4 75h5M5 81h6M34 85h10M49 85h6M12 89h10M24 89h8M27 97h5M34 97h21M12 101h10M24 101h5M27 109h5M34 109h21M12 113h10M24 113h5M16 117h2M27 123h5M34 123h21M49 139h6M56 139h3M28 147h12M42 147h3M46 147h12M58 149h8M21 153h5M28 153h19M26 159h3M18 163h4M16 167h2M27 171h4M16 179h3M8 193h2M26 201h6M33 209h6M44 209h6M51 209h6M30 213h3M25 217h5M32 217h20M28 221h6M27 225h5M34 225h18M8 229h2M57 235h6M68 235h6M75 235h1M23 245h2M26 245h4M8 251h2M11 251h4M40 257h6M51 257h6M35 267h12M12 269h4M29 269h4M12 277h4M16 281h4M15 297h7M27 297h6M36 299h9M60 299h6"/>
<path stroke="#dcdcaa" d="M31 13h7M20 25h11M20 27h13M20 29h3M2 43h6M2 61h6M17 85h3M22 93h13M21 97h5M22 105h15M21 109h5M25 117h8M21 121h5M21 123h5M21 125h8M17 139h8M33 149h8M68 149h8M13 153h7M31 159h3M41 163h4M48 171h11M32 173h4M11 201h4M20 203h3M26 203h9M38 203h6M47 203h4M54 203h9M13 209h13M13 215h5M13 217h7M57 217h8M36 221h8M13 225h7M57 225h8M17 229h11M13 235h15M28 239h8M36 241h9M26 243h8M41 243h6M13 257h11M21 267h12M31 271h5M33 273h5M68 279h8M7 299h3M24 307h11M25 309h12M24 311h13M24 313h3"/>
<path stroke="#9cdcfe" d="M11 1h5M4 3h3M10 3h5M17 3h4M4 5h5M11 5h4M4 7h3M9 7h4M4 9h7M13 9h7M13 17h13M6 19h6M13 19h4M13 25h6M13 27h6M13 29h6M10 53h3M8 67h6M16 67h5M8 71h7M17 71h5M10 75h3M21 85h11M15 87h11M33 89h10M58 91h10M36 93h10M56 97h11M30 101h7M39 101h12M55 103h12M39 105h7M48 105h12M56 109h11M30 113h7M35 117h7M56 123h11M26 139h13M41 139h3M12 143h13M12 147h13M12 149h7M22 149h9M43 149h13M8 155h9M28 155h7M16 159h7M23 163h6M33 163h7M18 165h6M19 167h6M62 169h6M32 171h6M60 171h6M24 173h7M37 173h6M20 179h1M11 193h7M13 203h6M27 209h3M46 211h3M12 213h3M17 213h5M24 213h4M36 213h3M22 217h1M53 217h3M12 221h6M21 221h5M45 221h3M22 225h3M53 225h3M69 225h3M29 229h6M29 235h13M44 235h3M49 235h5M50 237h5M12 239h6M37 239h13M16 241h10M29 241h6M15 243h10M35 243h5M31 245h6M25 257h6M33 257h5M27 263h6M14 267h6M17 269h7M16 271h6M24 271h6M16 273h7M25 273h7M61 279h6M5 297h3M10 297h3M18 299h1M26 299h3M31 299h3M50 299h3M55 299h3M12 303h1M17 307h6M17 309h7M17 311h6M17 313h6"/>
<path stroke="#6a9955" d="M0 41h49M4 47h23M4 51h25M0 59h50M4 65h19M4 69h27M4 73h10M4 83h57M4 137h58M4 199h34"/>
<path stroke="#ce9178" d="M39 13h18M59 13h13M12 23h14M22 91h34M22 103h31M22 115h42M14 141h59M27 169h18M27 181h49M15 211h29M15 237h33M12 261h49M23 279h36M12 305h18"/>
<path stroke="#aaaaaa" d="M9 1h1M10 1h1M16 1h1M17 1h1M18 1h1M24 1h1M32 1h1M33 1h1M7 3h1M8 3h1M9 3h1M15 3h1M21 3h1M22 3h1M9 5h1M10 5h1M15 5h1M16 5h1M17 5h1M30 5h1M35 5h1M36 5h1M7 7h1M8 7h1M13 7h1M14 7h1M23 7h1M11 9h1M12 9h1M20 9h1M21 9h1M22 9h1M23 9h1M18 13h1M24 13h1M29 13h1M30 13h1M38 13h1M57 13h1M72 13h1M74 13h1M75 13h1M27 17h1M4 19h1M5 19h1M12 19h1M17 19h1M19 19h1M20 19h1M22 19h1M23 19h1M15 21h1M26 23h1M12 25h1M19 25h1M31 25h1M32 25h1M33 25h1M12 27h1M19 27h1M33 27h1M34 27h1M35 27h1M12 29h1M19 29h1M23 29h1M24 29h1M8 31h1M4 33h1M5 33h1M6 33h1M2 35h1M0 37h1M0 43h1M1 43h1M8 43h1M14 43h1M21 43h1M22 43h1M20 45h1M12 49h1M19 49h1M20 49h1M9 53h1M13 53h1M21 53h1M22 53h1M0 55h1M0 61h1M1 61h1M8 61h1M14 61h1M21 61h1M22 61h1M18 63h1M14 67h1M21 67h1M22 67h1M29 67h1M15 71h1M22 71h1M23 71h1M31 71h1M9 75h1M13 75h1M14 75h1M0 77h1M12 81h1M20 85h1M32 85h1M44 85h1M46 85h1M47 85h1M55 85h1M60 85h1M62 85h1M14 87h1M27 87h1M22 89h1M23 89h1M32 89h1M43 89h1M45 89h1M46 89h1M48 89h1M21 91h1M56 91h1M68 91h1M69 91h1M20 93h1M21 93h1M35 93h1M46 93h1M20 95h1M26 95h1M20 97h1M26 97h1M32 97h1M33 97h1M55 97h1M67 97h1M68 97h1M12 99h1M22 101h1M23 101h1M29 101h1M37 101h1M51 101h1M53 101h1M54 101h1M56 101h1M21 103h1M53 103h1M67 103h1M68 103h1M20 105h1M21 105h1M37 105h1M38 105h1M46 105h1M60 105h1M20 107h1M26 107h1M20 109h1M26 109h1M32 109h1M33 109h1M55 109h1M67 109h1M68 109h1M12 111h1M22 113h1M23 113h1M29 113h1M37 113h1M39 113h1M40 113h1M42 113h1M21 115h1M64 115h1M65 115h1M18 117h1M23 117h1M24 117h1M33 117h1M34 117h1M42 117h1M20 119h1M26 119h1M20 121h1M26 121h1M27 121h1M20 123h1M26 123h1M32 123h1M33 123h1M55 123h1M67 123h1M68 123h1M69 123h1M20 125h1M29 125h1M30 125h1M31 125h1M12 127h1M8 129h1M6 131h1M4 133h1M25 139h1M39 139h1M44 139h1M46 139h1M47 139h1M55 139h1M59 139h1M64 139h1M65 139h1M67 139h1M13 141h1M73 141h1M8 145h1M9 145h1M26 147h1M40 147h1M41 147h1M45 147h1M58 147h1M59 147h1M20 149h1M31 149h1M32 149h1M41 149h1M42 149h1M56 149h1M66 149h1M67 149h1M12 151h1M12 153h1M20 153h1M26 153h1M27 153h1M47 153h1M48 153h1M49 153h1M17 155h1M18 155h1M27 155h1M35 155h1M36 155h1M24 159h1M29 159h1M30 159h1M34 159h1M35 159h1M36 159h1M22 163h1M29 163h1M31 163h1M40 163h1M45 163h1M46 163h1M47 163h1M54 163h1M25 165h1M18 167h1M25 167h1M27 167h1M28 167h1M30 167h1M26 169h1M45 169h1M61 169h1M68 169h1M69 169h1M70 169h1M31 171h1M38 171h1M40 171h1M46 171h1M47 171h1M59 171h1M66 171h1M67 171h1M74 171h1M31 173h1M36 173h1M43 173h1M44 173h1M20 175h1M16 177h1M19 179h1M21 179h1M23 179h1M24 179h1M26 179h1M26 181h1M16 183h1M12 185h1M10 187h1M8 189h1M10 193h1M18 193h1M4 195h1M15 201h1M16 201h1M21 201h1M23 201h1M24 201h1M33 201h1M12 203h1M19 203h1M23 203h1M24 203h1M25 203h1M35 203h1M36 203h1M37 203h1M44 203h1M45 203h1M46 203h1M51 203h1M52 203h1M53 203h1M63 203h1M64 203h1M4 205h1M26 209h1M30 209h1M32 209h1M39 209h1M41 209h1M42 209h1M50 209h1M57 209h1M62 209h1M63 209h1M65 209h1M14 211h1M44 211h1M49 211h1M50 211h1M15 213h1M22 213h1M23 213h1M28 213h1M29 213h1M34 213h1M12 215h1M18 215h1M19 215h1M12 217h1M20 217h1M21 217h1M23 217h1M30 217h1M31 217h1M52 217h1M56 217h1M65 217h1M66 217h1M67 217h1M68 217h1M69 217h1M70 217h1M19 221h1M26 221h1M27 221h1M34 221h1M35 221h1M44 221h1M48 221h1M12 223h1M12 225h1M20 225h1M21 225h1M25 225h1M32 225h1M33 225h1M52 225h1M56 225h1M65 225h1M66 225h1M67 225h1M72 225h1M73 225h1M74 225h1M75 225h1M10 229h1M15 229h1M16 229h1M28 229h1M35 229h1M36 229h1M42 229h1M4 231h1M28 235h1M42 235h1M47 235h1M54 235h1M56 235h1M63 235h1M65 235h1M66 235h1M74 235h1M14 237h1M48 237h1M55 237h1M56 237h1M26 239h1M27 239h1M36 239h1M50 239h1M51 239h1M57 239h1M59 239h1M27 241h1M35 241h1M45 241h1M46 241h1M47 241h1M25 243h1M34 243h1M40 243h1M47 243h1M48 243h1M49 243h1M51 243h1M25 245h1M30 245h1M37 245h1M38 245h1M39 245h1M12 247h1M8 249h1M10 251h1M15 251h1M4 253h1M24 257h1M31 257h1M38 257h1M39 257h1M46 257h1M48 257h1M49 257h1M57 257h1M62 257h1M64 257h1M14 259h1M61 261h1M26 263h1M33 263h1M8 265h1M9 265h1M20 267h1M33 267h1M34 267h1M47 267h1M49 267h1M16 269h1M24 269h1M26 269h1M27 269h1M33 269h1M39 269h1M22 271h1M30 271h1M36 271h1M37 271h1M38 271h1M23 273h1M32 273h1M38 273h1M39 273h1M40 273h1M12 275h1M13 275h1M14 275h1M17 277h1M18 277h1M20 277h1M22 279h1M59 279h1M67 279h1M12 283h1M8 285h1M6 287h1M4 289h1M2 291h1M0 293h1M8 297h1M9 297h1M13 297h1M14 297h1M34 297h1M10 299h1M11 299h1M16 299h1M19 299h1M21 299h1M29 299h1M30 299h1M34 299h1M35 299h1M45 299h1M47 299h1M48 299h1M53 299h1M54 299h1M58 299h1M59 299h1M67 299h1M14 301h1M13 303h1M30 305h1M16 307h1M23 307h1M35 307h1M36 307h1M37 307h1M16 309h1M24 309h1M37 309h1M38 309h1M39 309h1M16 311h1M23 311h1M37 311h1M38 311h1M39 311h1M16 313h1M23 313h1M27 313h1M28 313h1M8 315h1M6 317h1M4 319h1M2 321h1M0 323h1"/>
</svg>
<div style="left:693.4px;top:73.7px;width:82.9px;height:46px;background:rgba(121,121,121,.04)"></div>
<div style="left:701.9px;top:115.7px;width:75px;height:2px;background:#2b5a8a"></div>
</div>
<div id="panel">
<span class="t pt" style="left:20.3px;;letter-spacing:-0.04px">PROBLEMAS</span>
<span class="t pt" style="left:108.3px;;letter-spacing:0.10px">SAÍDA</span>
<span class="t pt" style="left:163.7px;;letter-spacing:-0.08px">CONSOLE DE DEPURAÇÃO</span>
<span class="t pt on" style="left:323.7px;;letter-spacing:0.11px">TERMINAL</span>
<span class="t pt" style="left:401.4px;;letter-spacing:-0.03px">GITLENS</span>
<div style="left:323.0px;top:27.6px;width:55.6px;height:1.2px;background:#e7e7e7"></div>
<svg style="left:602.1px;top:9.1px;width:16px;height:16px;fill:none;stroke:#c5c5c5;stroke-width:1.1;stroke-linecap:round;stroke-linejoin:round;" viewBox="0 0 16 16"><path d="M1.800 1.600h12.400a.8.8 0 0 1 .8.800v11.200a.8.8 0 0 1-.8.800H1.800a.8.8 0 0 1-.8-.8V2.400a.8.8 0 0 1 .8-.8zM5.200 5L8.200 8l-3 3"/></svg>
<span class="t" style="left:622.1px;top:10.8px;font-size:11.6px;color:#ccc;letter-spacing:-0.54px">zsh</span>
<svg style="left:648.9px;top:9.1px;width:16px;height:16px;fill:none;stroke:#c5c5c5;stroke-width:1.1;stroke-linecap:round;stroke-linejoin:round;" viewBox="0 0 16 16"><path d="M8 1.800v12.400M1.800 8h12.400"/></svg>
<svg style="left:665.6px;top:9.1px;width:16px;height:16px;fill:none;stroke:#c5c5c5;stroke-width:1.1;stroke-linecap:round;stroke-linejoin:round;" viewBox="0 0 16 16"><path d="M5 6.500L8 9.500l3-3"/></svg>
<svg style="left:688.9px;top:9.1px;width:16px;height:16px;fill:none;stroke:#c5c5c5;stroke-width:1.1;stroke-linecap:round;stroke-linejoin:round;" viewBox="0 0 16 16"><path d="M2.100 2.500h11.800v11H2.100zM8 2.500v11"/></svg>
<svg style="left:713.9px;top:9.1px;width:16px;height:16px;fill:none;stroke:#c5c5c5;stroke-width:1.1;stroke-linecap:round;stroke-linejoin:round;" viewBox="0 0 16 16"><path d="M3.400 4.600h9.200M6.200 4.400V2.700h3.600v1.700M4.300 4.800l.5 9h6.400l.5-9M6.600 6.800v5M9.400 6.800v5"/></svg>
<svg style="left:740.1px;top:9.1px;width:16px;height:16px;fill:none;stroke:#c5c5c5;stroke-width:1.1;stroke-linecap:round;stroke-linejoin:round;" viewBox="0 0 16 16"><path d="M3.800 10L8 5.800l4.200 4.200"/></svg>
<svg style="left:762.0px;top:9.1px;width:16px;height:16px;fill:none;stroke:#c5c5c5;stroke-width:1.1;stroke-linecap:round;stroke-linejoin:round;" viewBox="0 0 16 16"><path d="M4 4l8 8M12 4l-8 8"/></svg>
<div id="term" style="left:0;top:0;width:100%;height:100%">
<span class="t" style="left:20.7px;top:57.7px;letter-spacing:.19px"><span style="position:static;font-weight:bold;color:#29b8db">crab-dlna</span> on <span style="position:static;font-weight:bold;color:#d670d6"><span style="position:static;display:inline-block;width:1ch"></span> main</span> is <span style="position:static;display:inline-block;width:2ch"></span> <span style="position:static;font-weight:bold;color:#f5a623">v0.1.0</span> via <span style="position:static;display:inline-block;width:2ch"></span> <span style="position:static;font-weight:bold;color:#f14c4c">v1.60.0</span></span>
<span class="t" style="left:20.7px;top:73.7px;letter-spacing:.19px"><span style="position:static;font-weight:bold;color:#23d18b">❯</span></span>
<div style="left:36.8px;top:74.2px;width:8px;height:15px;border:1px solid #ccc"></div>
<svg style="left:125.0px;top:57.7px;width:9px;height:16px;fill:none;stroke:#d670d6;stroke-width:1.500" viewBox="0 0 9 16"><path d="M2.200 .8V15.200M6.800 3v3.600L2.400 11.600"/></svg>
<svg style="left:203.7px;top:57.2px;width:17.5px;height:17.5px" viewBox="0 0 16 16"><path d="M8 1.500l6 2.800v7.400l-6 2.800-6-2.800V4.300z" fill="#d9a066"/><path d="M8 7.100l6-2.800v7.400l-6 2.800z" fill="#b87a45"/><path d="M8 1.500l6 2.800-6 2.800-6-2.800z" fill="#ecc998"/><path d="M4.600 2.900l6.200 2.900v2.400l1.400-.6V5.200L6 2.300z" fill="#f1dcb4"/></svg>
<svg style="left:316.0px;top:57.2px;width:17.5px;height:17.5px" viewBox="0 0 16 16"><ellipse cx="8" cy="10" rx="4.800" ry="3.600" fill="#e8542a"/><path d="M2.600 7.600C.8 6.200 1 3.400 3 2.200c-.3 1.200 0 2 .9 2.500C4.200 3.700 4.800 3.300 5.600 3.200 5.800 5 5 6.600 3.600 7.400zM13.400 7.600c1.800-1.400 1.600-4.200-.4-5.400.3 1.200 0 2-.9 2.500-.3-1-.9-1.400-1.700-1.500-.2 1.800.6 3.400 2 4.200z" fill="#e8542a"/><path d="M3.400 11l-2 .8M3.800 12.400l-1.800 1.400M12.600 11l2 .8M12.200 12.400l1.800 1.400" stroke="#c9401c" stroke-width="1" fill="none"/><circle cx="6.400" cy="7" r=".8" fill="#222"/><circle cx="9.600" cy="7" r=".8" fill="#222"/></svg>
</div>
</div>
</div>
<div id="status">
<svg style="left:12.6px;" viewBox="0 0 16 16"><circle cx="4.600" cy="3.400" r="1.800"/><circle cx="4.600" cy="12.600" r="1.800"/><circle cx="11.600" cy="5.400" r="1.800"/><path d="M4.600 5.200v5.600M11.600 7.200c0 2.600-7 1.200-7 3.600"/></svg>
<span class="t" style="left:32.0px;;letter-spacing:0.50px">main</span>
<svg style="left:76.3px;" viewBox="0 0 16 16"><path d="M2.600 7.400A5.500 5.500 0 0 1 12.600 5M13.400 8.600A5.500 5.500 0 0 1 3.400 11M12.800 2.400v2.800H10M3.200 13.600v-2.800H6"/></svg>
<svg style="left:105.1px;" viewBox="0 0 16 16"><circle cx="8" cy="8" r="5.800"/><path d="M5.800 5.800l4.400 4.400M10.200 5.800l-4.400 4.400"/></svg>
<span class="t" style="left:124.6px;">0</span>
<svg style="left:133.6px;" viewBox="0 0 16 16"><path d="M8 2.200L14.200 13.400H1.800zM8 6.400v3.600M8 11.400v.6"/></svg>
<span class="t" style="left:151.7px;">0</span>
<span class="t" style="left:177.6px;;letter-spacing:0.11px">rust-analyzer</span>
<svg style="left:516.4px;" viewBox="0 0 16 16"><circle cx="8" cy="8" r="2.200"/><path d="M8 2v3.800M8 10.200V14"/></svg>
<span class="t" style="left:534.1px;;letter-spacing:-0.04px">You, há 2 semanas</span>
<span class="t" style="left:655.9px;;letter-spacing:-0.23px">Ln 59, Col 44</span>
<span class="t" style="left:742.9px;;letter-spacing:-0.27px">Espaços: 4</span>
<span class="t" style="left:818.0px;font-size:11.8px;top:5.5px;letter-spacing:-0.34px">UTF-8</span>
<span class="t" style="left:866.3px;font-size:11.8px;top:5.5px;letter-spacing:-0.96px">LF</span>
<span class="t" style="left:894.3px;;letter-spacing:-0.23px">Rust</span>
<svg style="left:933.9px;" viewBox="0 0 16 16"><path d="M8 2.600c-1.200-1-3.600-.8-4.400.5-.5.800-.5 1.900-.3 2.700C2 6.500 1.400 7.600 1.400 9v1.800c1.500 1.900 3.900 2.900 6.600 2.900s5.100-1 6.600-2.900V9c0-1.400-.6-2.500-1.900-3.200.2-.8.200-1.900-.3-2.700C11.600 1.800 9.200 1.600 8 2.600z" fill="#fff" stroke="none"/><path d="M5.200 7.200h5.600c.8 0 1.400.6 1.400 1.400v1.900c-1.100.9-2.600 1.400-4.200 1.400s-3.100-.5-4.200-1.400V8.600c0-.8.600-1.400 1.400-1.400z" fill="#007acc" stroke="none"/><path d="M6.500 8.600v1.600M9.500 8.600v1.600" stroke="#fff" stroke-width="1.300"/><path d="M4.600 3.600h2.200v2.200H4.600zM9.200 3.600h2.200v2.200H9.200z" fill="#007acc" stroke="none"/></svg>
<svg style="left:964.3px;" viewBox="0 0 16 16"><circle cx="5.400" cy="6.600" r="1.900"/><path d="M1.800 14c.2-2.400 1.600-3.700 3.600-3.700s3.400 1.300 3.600 3.700M8.400 2.200h6v4.600h-2.600l-1.600 1.600V6.800H8.400z"/></svg>
<svg style="left:994.6px;" viewBox="0 0 16 16"><path d="M8 2.400c-2.400 0-3.800 1.800-3.800 4v3L3 11.600h10l-1.200-2.200v-3c0-2.200-1.400-4-3.800-4zM6.800 13.200a1.200 1.200 0 0 0 2.400 0"/></svg>
</div>
</div></div>
</body>
</html>
